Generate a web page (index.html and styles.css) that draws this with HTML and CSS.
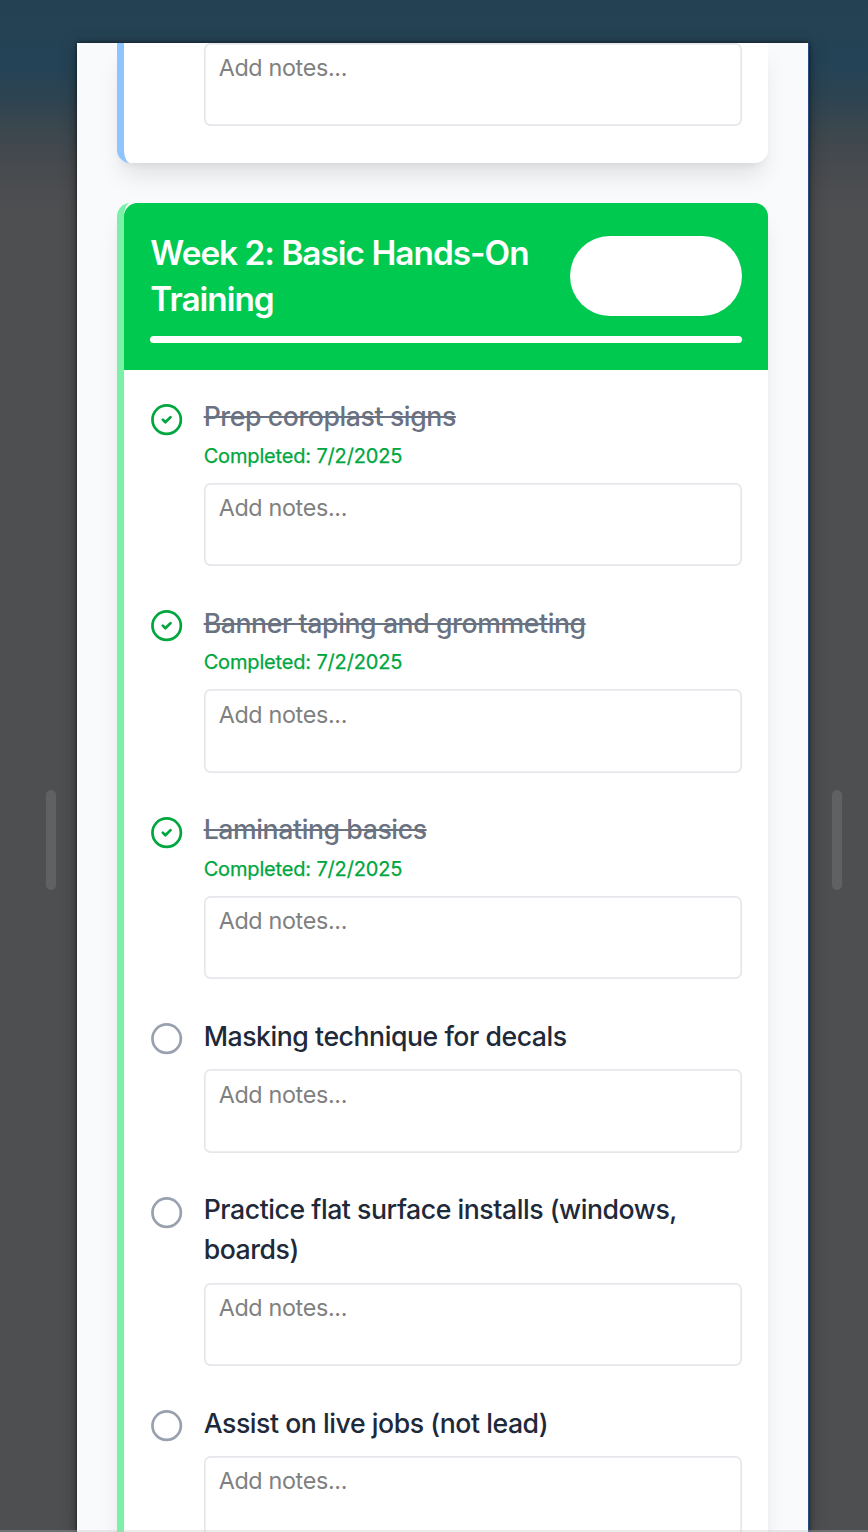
FILE: index.html
```
<!DOCTYPE html>
<html lang="en">
<head>
<meta charset="utf-8">
<title>Training checklist</title>
<link rel="stylesheet" href="styles.css">
</head>
<body>
<div class="backdrop">
  <span class="handle handle-left"></span>
  <main class="sheet">
    <section class="card card-blue">
      <div class="items">
        <div class="item item-clipped"><div class="body"><div class="notes">Add notes...</div></div></div>
      </div>
    </section>
    <section class="card card-green">
      <header class="head">
        <div class="head-row">
          <h2 class="title">Week 2: Basic Hands-On<br>Training</h2>
          <span class="badge"></span>
        </div>
        <div class="progress"></div>
      </header>
      <div class="items">
        <div class="item done">
          <svg class="icon" viewBox="0 0 24 24"><circle cx="12" cy="12" r="11"/><path d="m9 12 2 2 4-4"/></svg>
          <div class="body"><p class="task">Prep coroplast signs</p><p class="date">Completed: 7/2/2025</p><div class="notes">Add notes...</div></div>
        </div>
        <div class="item done">
          <svg class="icon" viewBox="0 0 24 24"><circle cx="12" cy="12" r="11"/><path d="m9 12 2 2 4-4"/></svg>
          <div class="body"><p class="task">Banner taping and grommeting</p><p class="date">Completed: 7/2/2025</p><div class="notes">Add notes...</div></div>
        </div>
        <div class="item done">
          <svg class="icon" viewBox="0 0 24 24"><circle cx="12" cy="12" r="11"/><path d="m9 12 2 2 4-4"/></svg>
          <div class="body"><p class="task">Laminating basics</p><p class="date">Completed: 7/2/2025</p><div class="notes">Add notes...</div></div>
        </div>
        <div class="item">
          <svg class="icon" viewBox="0 0 24 24"><circle cx="12" cy="12" r="11"/></svg>
          <div class="body"><p class="task">Masking technique for decals</p><div class="notes">Add notes...</div></div>
        </div>
        <div class="item">
          <svg class="icon" viewBox="0 0 24 24"><circle cx="12" cy="12" r="11"/></svg>
          <div class="body"><p class="task">Practice flat surface installs (windows,<br>boards)</p><div class="notes">Add notes...</div></div>
        </div>
        <div class="item">
          <svg class="icon" viewBox="0 0 24 24"><circle cx="12" cy="12" r="11"/></svg>
          <div class="body"><p class="task">Assist on live jobs (not lead)</p><div class="notes">Add notes...</div></div>
        </div>
      </div>
    </section>
  </main>
  <span class="handle handle-right"></span>
  <div class="edge"></div>
</div>
</body>
</html>
```
FILE: styles.css
```
* { box-sizing: border-box; }
body, h2, p { margin: 0; }
body {
  font-family: Inter, "Liberation Sans", sans-serif;
  color: #1e2939;
}
.backdrop {
  position: relative;
  display: flex;
  height: 1532px;
  padding-top: 43px;
  overflow: hidden;
  background: linear-gradient(#244153 0, #254356 68px, #2e4451 100px, #3b474e 130px, #474a4e 165px, #4e4f51 215px, #4e4f51 100%);
}
.sheet {
  flex: none;
  width: 732px;
  height: 1489px;
  padding: 0 40px;
  overflow: hidden;
  background: #f9fafc;
  border-right: 1px solid #284b83;
  box-shadow: 0 0 4px rgba(0, 0, 0, .6), 0 3px 16px rgba(0, 0, 0, .35);
}
.handle {
  flex: none;
  width: 10px;
  height: 100px;
  margin-top: 747px;
  border-radius: 5px;
  background: #606163;
}
.handle-left { margin-left: 46px; margin-right: 21px; }
.handle-right { margin-left: 23px; }
.edge {
  position: absolute;
  inset: auto 0 0;
  height: 2px;
  background: rgba(190, 190, 190, .3);
}
.card {
  width: 651.33px;
  border-left: 7px solid;
  border-radius: 13.33px;
  background: #fff;
  box-shadow: 0 16.67px 25px -5px rgba(0, 0, 0, .1), 0 6.67px 10px -6.67px rgba(0, 0, 0, .1);
}
.card-blue {
  border-color: #8ec5ff;
  border-radius: 0 0 13.33px 13.33px;
  margin-bottom: 40.2px;
}
.card-blue .items { padding-top: 0; }
.card-green { border-color: #7bf1a8; }
.head {
  padding: 26.67px 26.67px 26.67px 26.33px;
  height: 166.67px;
  border-radius: 13.33px 13.33px 0 0;
  background: #00c950;
  color: #fff;
}
.head-row { display: flex; align-items: center; justify-content: space-between; }
.title {
  font-size: 33.33px;
  line-height: 46.67px;
  font-weight: 600;
  letter-spacing: -.98px;
  white-space: nowrap;
}
.badge { width: 171.9px; height: 80px; border-radius: 40px; background: #fff; }
.progress { height: 6.67px; margin-top: 13.33px; border-radius: 4px; background: #fff; }
.items { padding: 26.67px 26.67px 26.67px 26.33px; }
.item { display: flex; gap: 20px; padding-bottom: 36.64px; }
.item-clipped { padding: 0 0 10px 53.33px; }
.icon {
  flex: none;
  width: 33.33px;
  height: 33.33px;
  margin-top: 6.5px;
  padding: 1.2px;
  fill: none;
  stroke: #99a1af;
  stroke-width: 2.1;
  stroke-linecap: round;
  stroke-linejoin: round;
  overflow: visible;
}
.done .icon { stroke: #00a63e; }
.body { flex: 1; }
.task {
  font-size: 26.67px;
  line-height: 40px;
  font-weight: 500;
  letter-spacing: -.46px;
  white-space: nowrap;
}
.done .task { color: #6a7282; letter-spacing: -.41px; text-decoration: line-through; }
.date {
  margin-top: 6.67px;
  font-size: 20px;
  line-height: 26.67px;
  letter-spacing: -.16px;
  -webkit-text-stroke: .25px #00a63e;
  color: #00a63e;
}
.notes {
  height: 83.33px;
  margin-top: 13.33px;
  padding: 8.33px 15px;
  border-radius: 6.67px;
  box-shadow: inset 0 0 0 1.67px #e5e7eb;
  font-size: 23.33px;
  line-height: 33.33px;
  letter-spacing: -.34px;
  color: #808080;
}
.item-clipped .notes { margin-top: -.34px; }
```
